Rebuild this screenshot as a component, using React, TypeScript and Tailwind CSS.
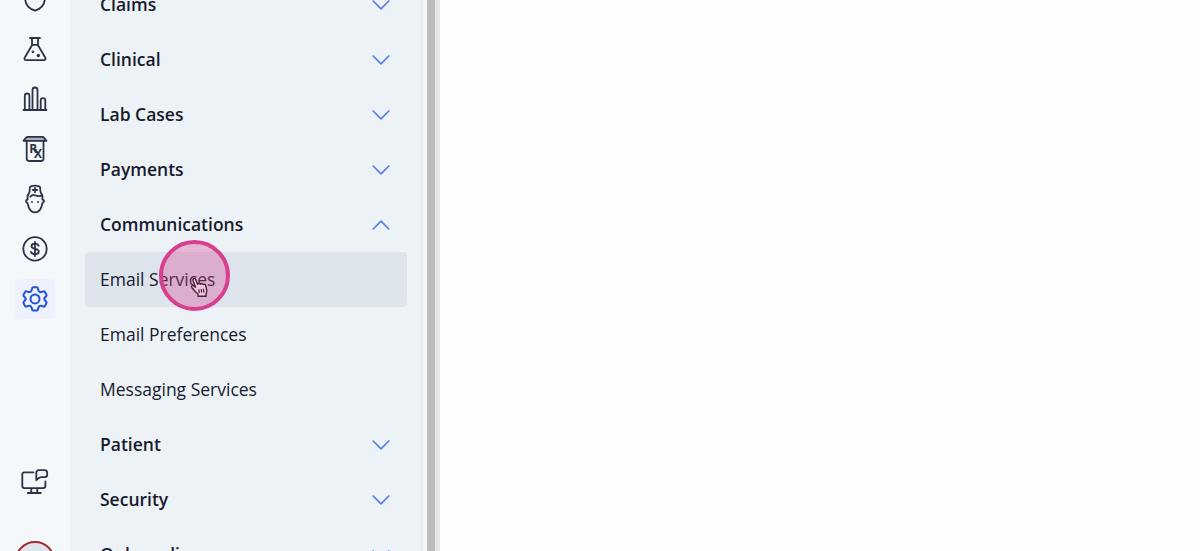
import type { ReactNode } from "react";
import { clsx } from "clsx";

interface SectionRow {
	label: string;
	open?: boolean;
	items?: string[];
}

const sections: SectionRow[] = [
	{ label: "Claims" },
	{ label: "Clinical" },
	{ label: "Lab Cases" },
	{ label: "Payments" },
	{
		label: "Communications",
		open: true,
		items: ["Email Services", "Email Preferences", "Messaging Services"],
	},
	{ label: "Patient" },
	{ label: "Security" },
	{ label: "Onboarding" },
];

const activeItem = "Email Services";

function Icon({ children }: { children: ReactNode }) {
	return (
		<svg
			viewBox="0 0 40 40"
			className="size-10"
			fill="none"
			stroke="currentColor"
			strokeWidth="1.8"
			strokeLinecap="round"
			strokeLinejoin="round"
		>
			{children}
		</svg>
	);
}

function ShieldIcon() {
	return (
		<Icon>
			<path d="M20 8.5c-3 2.3-6.3 3.3-9.8 3.5v7.5c0 6 3.6 10.2 9.8 12.2 6.2-2 9.800-6.200 9.800-12.200V12c-3.500-.2-6.800-1.200-9.800-3.500z" />
		</Icon>
	);
}

function FlaskIcon() {
	return (
		<Icon>
			<path d="M15 9h10M17 9.500v6.800L9.800 28.500c-.8 1.600-.2 2.700 1.400 2.700h17.600c1.600 0 2.200-1.100 1.400-2.700L23 16.300V9.500M17 15.800h6" />
			<circle cx="18" cy="22.800" r=".5" />
			<circle cx="23.300" cy="26.500" r=".8" fill="currentColor" />
		</Icon>
	);
}

function BarsIcon() {
	return (
		<Icon>
			<path d="M8.500 31h23M9.800 31V16.800a2.300 2.300 0 0 1 4.600 0V31M17.500 31V11a2.500 2.500 0 0 1 5 0v20M25.700 31v-9.500a2.300 2.300 0 0 1 4.600 0V31" />
		</Icon>
	);
}

function PrescriptionIcon() {
	return (
		<Icon>
			<path
				d="M8.500 11.800l2.600-3.200c.4-.5.9-.8 1.500-.8h14.800c.6 0 1.100.3 1.500.8l2.600 3.200z"
				fill="#a9b1be"
			/>
			<path d="M11.700 12v17.600c0 1.600.8 2.400 2.400 2.400h12c1.600 0 2.400-.8 2.400-2.400V12" />
			<text
				x="14.300"
				y="24"
				fontSize="12"
				fontWeight="700"
				fill="currentColor"
				stroke="none"
				fontFamily="Open Sans, sans-serif"
			>
				R<tspan dx="-3.300" dy="5">X</tspan>
			</text>
		</Icon>
	);
}

function NurseIcon() {
	return (
		<Icon>
			<path d="M12.800 16.500l1.700-3.700.4-4.300c.1-.6.4-1 1-1.200 2.700-.9 5.500-.9 8.200 0 .6.2.9.6 1 1.200l.4 4.300 1.700 3.700M15.300 17.800c1.500-2 3.200-2.300 4.700-1.600 2 .9 4.700 1.100 6.700.5" />
			<path d="M12.600 16.300v4.200c-2 .2-2.200 2.800 0 3.600 1 5.700 4 9.300 7.400 9.300s6.400-3.600 7.400-9.300c2.200-.8 2-3.400 0-3.600v-4.200" />
			<path d="M20 8.800v4.400M17.800 11h4.400" />
			<circle cx="17" cy="23" r=".9" fill="currentColor" stroke="none" />
			<circle cx="23" cy="23" r=".9" fill="currentColor" stroke="none" />
		</Icon>
	);
}

function DollarIcon() {
	return (
		<Icon>
			<circle cx="20" cy="19.900" r="11.700" />
			<path d="M23.600 16.700c-.5-1.400-1.800-2-3.600-2-2 0-3.500.9-3.500 2.500 0 3.500 7.300 1.800 7.300 5.300 0 1.700-1.600 2.600-3.800 2.600-2 0-3.500-.7-4-2.200M20 12.800v14.300" />
		</Icon>
	);
}

function GearIcon() {
	return (
		<Icon>
			<path
				d="M18.300 8.300h3.400q1 0 1.200 1l.5 2q.3 1 1.200 1.500t1.900.2l1.900-.6q1-.3 1.500.6l1.500 2.600q.5.900-.2 1.600l-1.300 1.300q-1.300 1.400 0 2.800l1.300 1.400q.7.700.2 1.600l-1.500 2.600q-.5.900-1.500.6l-1.900-.6q-1-.3-1.900.2t-1.200 1.500l-.5 2q-.2 1-1.200 1h-3.400q-1 0-1.200-1l-.5-2q-.3-1-1.200-1.500t-1.900-.2l-1.900.6q-1 .3-1.500-.6l-1.500-2.600q-.5-.9.200-1.600l1.300-1.400q1.300-1.400 0-2.800l-1.300-1.300q-.7-.7-.2-1.600l1.500-2.600q.5-.9 1.500-.6l1.900.6q1 .3 1.900-.2t1.200-1.500l.5-2q.2-1 1.200-1z"
				strokeWidth="2"
			/>
			<circle cx="20" cy="19.900" r="4.500" strokeWidth="2" />
		</Icon>
	);
}

function MonitorChatIcon() {
	return (
		<Icon>
			<path d="M18.500 11.300h-9C8 11.300 7.300 12.100 7.300 13.600v11.200c0 1.500.7 2.300 2.200 2.300h18.700c1.500 0 2.200-.8 2.200-2.300v-4.500M16.300 27.500v4M22.300 27.500v4M12.800 32h13" />
			<path d="M21.300 19.200v-7.500c0-1.700.9-2.600 2.600-2.600h5.700c1.700 0 2.600.9 2.600 2.600v1.800c0 1.700-.9 2.600-2.600 2.600h-3.500c-1.600 0-3.200 1.300-4.800 3.100z" />
		</Icon>
	);
}

function Chevron({ up }: { up?: boolean }) {
	return (
		<svg
			viewBox="0 0 18 10"
			className={clsx("h-[10px] w-[18px]", up && "rotate-180")}
			fill="none"
			stroke="#5580ec"
			strokeWidth="1.7"
			strokeLinecap="round"
			strokeLinejoin="round"
		>
			<path d="M1.200 1l7.800 7.900 7.800-7.900" />
		</svg>
	);
}

function RailButton({ active, children }: { active?: boolean; children: ReactNode }) {
	return (
		<div className="flex h-[50px] shrink-0 items-center justify-center">
			<div className={clsx("size-10 rounded", active && "bg-[#edf2fe] text-[#2450dc]")}>
				{children}
			</div>
		</div>
	);
}

function NavRail() {
	return (
		<nav className="flex w-[70px] shrink-0 flex-col bg-[#f4f8fb] text-[#2b3347]">
			<div className="-mt-[26px] flex flex-col">
				<RailButton><ShieldIcon /></RailButton>
				<RailButton><FlaskIcon /></RailButton>
				<RailButton><BarsIcon /></RailButton>
				<RailButton><PrescriptionIcon /></RailButton>
				<RailButton><NurseIcon /></RailButton>
				<RailButton><DollarIcon /></RailButton>
				<RailButton active><GearIcon /></RailButton>
			</div>
			<div className="mt-[132px] flex flex-col items-center">
				<RailButton><MonitorChatIcon /></RailButton>
				<div className="mt-[35px] size-10 shrink-0 rounded-full border-2 border-[#a82833] bg-[#dfe5ee]" />
			</div>
		</nav>
	);
}

function ClickMarker() {
	return (
		<div className="absolute -top-3 left-[73.5px] size-[71px] rounded-full border-4 border-[#d83f8e] bg-[#d9408f]/33">
			<svg
				viewBox="0 0 18 22"
				className="absolute top-[32px] left-[27px] h-[22px] w-[18px]"
				fill="#f0c6dc"
				stroke="#4a2440"
				strokeWidth="1.4"
				strokeLinejoin="round"
			>
				<path d="M5.200 15.500L2 11.700C.8 10 2.500 8.700 4 10l1.500 1.300L3 4.500c-.6-2 1.800-2.900 2.600-1.100l2 4.900c.4-1.400 2.200-1.400 2.700 0 .7-1.100 2.200-.9 2.700.3.900-.9 2.300-.4 2.700.9l1 4.400c.3 1.700-.1 2.900-.6 4.100v2.200H8v-2.200z" />
				<path d="M8.800 13.300l.6 3.700M11.200 13l.5 3.700M13.500 12.800l.3 3.700" strokeWidth="1.200" />
			</svg>
		</div>
	);
}

function SettingsMenu() {
	return (
		<aside className="w-[351px] shrink-0 bg-[#edf2f7] pl-[15px]">
			<div className="-mt-[23px] flex w-[322px] flex-col">
				{sections.map((section) => (
					<div key={section.label}>
						<div className="flex h-[55px] items-center justify-between pr-[17px] pl-[15px] font-semibold">
							<span className="pb-0.5">{section.label}</span>
							<Chevron up={section.open} />
						</div>
						{section.items?.map((item) => (
							<div
								key={item}
								className={clsx(
									"relative flex h-[55px] items-center rounded pl-[15px]",
									item === activeItem && "bg-[#dee4ec]",
								)}
							>
								<span className="pb-0.5">{item}</span>
								{item === activeItem && <ClickMarker />}
							</div>
						))}
					</div>
				))}
			</div>
		</aside>
	);
}

export default function App() {
	return (
		<div className="flex h-screen overflow-hidden bg-[#fdfdfd] font-['Open_Sans',sans-serif] text-[17.5px] leading-6 text-[#171b2d]">
			<NavRail />
			<SettingsMenu />
			<div className="w-0.5 shrink-0 bg-[#e9edf1]" />
			<div className="w-1 shrink-0 bg-[#f5f5f5]" />
			<div className="w-2 shrink-0 bg-[#bbbbbb]" />
			<div className="w-[5px] shrink-0 bg-[#e6e6e6]" />
			<main className="flex-1" />
		</div>
	);
}
